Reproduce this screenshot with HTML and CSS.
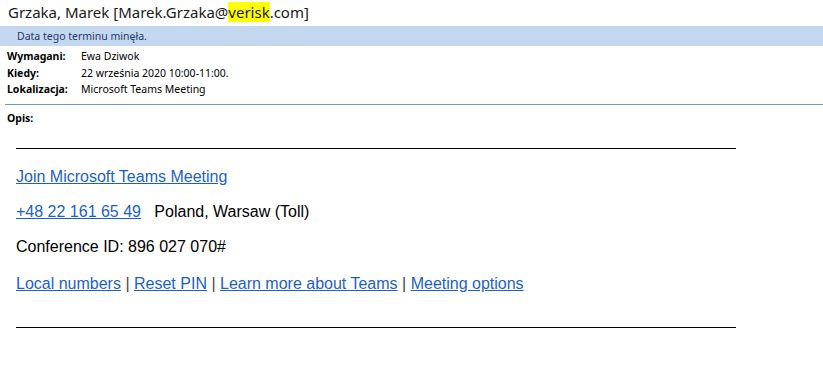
FILE: index.html
```html
<!DOCTYPE html>
<html>
<head>
  <title>Microsoft Teams Meeting</title>
<link rel="stylesheet" href="styles.css">
</head>
<body>
  <div class="sender">Grzaka, Marek [Marek.Grzaka@<span class="hl">verisk</span>.com]</div>
  <div class="banner">Data tego terminu minęła.</div>
  <table class="meta">
    <tbody>
      <tr>
        <th>Wymagani:</th>
        <td>Ewa Dziwok</td>
      </tr>
      <tr>
        <th>Kiedy:</th>
        <td>22 września 2020 10:00-11:00.</td>
      </tr>
      <tr>
        <th>Lokalizacja:</th>
        <td>Microsoft Teams Meeting</td>
      </tr>
    </tbody>
  </table>
  <div class="sep"></div>
  <div class="opis">Opis:</div>
  <div class="invite">
    <div class="rule"></div>
    <p class="line first"><a href="#">Join Microsoft Teams Meeting</a></p>
    <p class="line"><a href="#">+48 22 161 65 49</a>&nbsp;&nbsp; Poland, Warsaw (Toll)</p>
    <p class="line">Conference ID: 896 027 070#</p>
    <p class="line last"><a href="#">Local numbers</a> <span class="pipe">|</span> <a href="#">Reset PIN</a> <span class="pipe">|</span> <a href="#">Learn more about Teams</a> <span class="pipe">|</span> <a href="#">Meeting options</a></p>
    <div class="rule bottom"></div>
  </div>
</body>
</html>
```

FILE: styles.css
```css
body {
  margin: 0;
  font-family: "Segoe UI", "Noto Sans", sans-serif;
  color: #000;
  background-color: #fff;
}
.sender {
  height: 26px;
  padding-left: 8px;
  font-size: 15px;
  line-height: 24px;
  color: #1a1a1a;
}
.hl {
  background-color: #ffff00;
}
.banner {
  height: 20px;
  padding-left: 17px;
  font-size: 10.5px;
  line-height: 20px;
  background-color: #c4d9ef;
  color: #1e3a6e;
}
.meta {
  margin: 2px 0 0 7px;
  border-collapse: collapse;
  font-size: 10.5px;
}
.meta th {
  padding: 0;
  width: 74px;
  height: 16.5px;
  text-align: left;
  font-weight: bold;
}
.meta td {
  padding: 0;
}
.sep {
  margin: 6px 0 0 5px;
  border-top: 1px solid #6c97cd;
}
.opis {
  padding: 6px 0 0 7px;
  height: 22px;
  font-size: 10.5px;
  font-weight: bold;
}
.invite {
  width: 720px;
  padding: 0 0 0 16px;
  font-family: Arial, "Liberation Sans", sans-serif;
  font-size: 16px;
}
.rule {
  margin-top: 15px;
  border-top: 1px solid #000;
}
.rule.bottom {
  margin-top: 34px;
}
.line {
  margin: 17px 0 0 0;
  line-height: 18px;
}
.line.first {
  margin-top: 19px;
}
.line.last {
  margin-top: 19px;
}
.line a {
  color: #1c5fc8;
}
.pipe {
  color: #444;
}
```
